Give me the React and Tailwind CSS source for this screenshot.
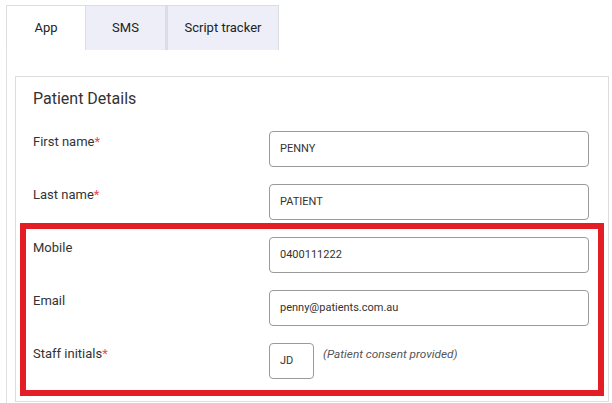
import React from "react";

const rows = [
  { label: "First name", required: true, value: "PENNY" },
  { label: "Last name", required: true, value: "PATIENT" },
  { label: "Mobile", value: "0400111222" },
  { label: "Email", value: "penny@patients.com.au" },
];

function Field({ label, required, children }) {
  return (
    <div className="flex items-start h-[36px]">
      <div className="w-[236px] pt-px text-[13px] leading-[20px] text-[#333]">
        {label}
        {required && <span className="text-[#ee4a50]">*</span>}
      </div>
      {children}
    </div>
  );
}

export default function App() {
  return (
    <div className="min-h-screen bg-white pl-[6px] pt-[5px] font-['Roboto',sans-serif] text-[#222] overflow-hidden">
      {/* Tabs */}
      <div className="flex h-[45px]">
        <div className="w-[80px] border border-b-0 border-[#dedede] bg-white flex items-center justify-center text-[13px]">
          App
        </div>
        <div className="w-[80px] border border-b-0 border-l-0 border-[#dcdde3] bg-[#edeef7] flex items-center justify-center text-[13px]">
          SMS
        </div>
        <div className="w-[113px] border border-b-0 border-l-2 border-[#dcdde3] bg-[#edeef7] flex items-center justify-center text-[13px]">
          Script tracker
        </div>
      </div>

      {/* Tab content */}
      <div className="border-l border-[#e0e0e0] pl-[8px] pt-[26px] pb-[20px]">
        <div className="relative w-[594px] border border-[#dddddd] pl-[17px] pr-[19px] pt-[10px] pb-[22px]">
          <h2 className="text-[16px] leading-[24px] text-[#333] font-normal">Patient Details</h2>

          <div className="mt-[20px] flex flex-col gap-[17px]">
            {rows.map((r) => (
              <Field key={r.label} label={r.label} required={r.required}>
                <div className="w-[320px] h-[36px] border border-[#9a9a9a] rounded-[4px] px-[10px] flex items-center text-[11px] text-[#333]">
                  {r.value}
                </div>
              </Field>
            ))}
            <Field label="Staff initials" required>
              <div className="flex items-start gap-[9px]">
                <div className="w-[45px] h-[36px] border border-[#9a9a9a] rounded-[4px] px-[10px] flex items-center text-[11px] text-[#333]">
                  JD
                </div>
                <span className="pt-[1px] text-[11.8px] leading-[20px] italic text-[#555]">
                  (Patient consent provided)
                </span>
              </div>
            </Field>
          </div>

          {/* highlight overlay */}
          <div className="absolute left-[4px] top-[146px] w-[584px] h-[173px] border-[6px] border-[#e41e25] pointer-events-none" />
        </div>
      </div>
    </div>
  );
}
